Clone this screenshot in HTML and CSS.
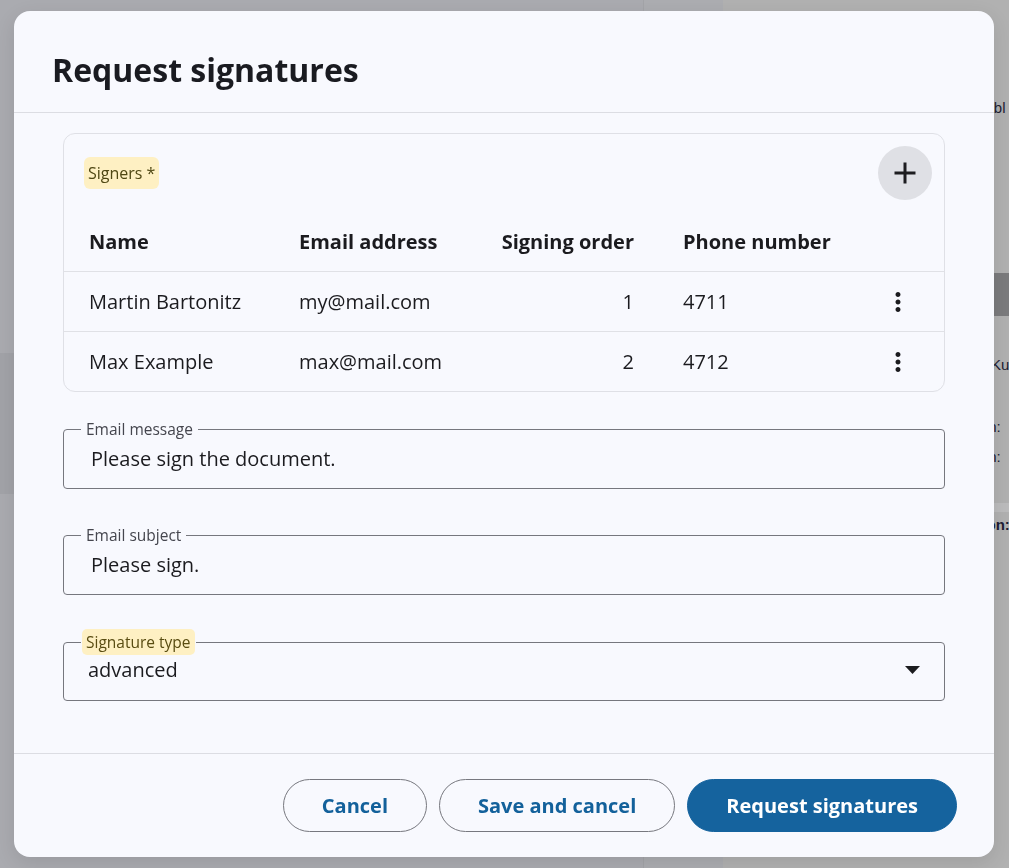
FILE: index.html
```html
<!DOCTYPE html>
<html lang="en">
<head>
<meta charset="utf-8">
<title>Request signatures</title>
<link rel="stylesheet" href="styles.css">
</head>
<body>
<div class="page" aria-hidden="true">
  <div class="col-main"><div class="band-main"></div></div>
  <div class="col-side"></div>
  <div class="col-right">
    <div class="rtext r-table">Tabl</div>
    <div class="rband-dark"></div>
    <div class="rtext r-kunde">Ku</div>
    <div class="rtext r-person1">Person:</div>
    <div class="rtext r-person2">Person:</div>
    <div class="rband-light"></div>
    <div class="rtext r-region">Region:</div>
  </div>
</div>

<div class="scrim">
  <div class="dialog" role="dialog" aria-labelledby="dlg-title">
    <header class="dlg-head">
      <h1 class="dlg-title" id="dlg-title">Request signatures</h1>
    </header>

    <div class="dlg-body">
      <section class="signers">
        <div class="signers-top">
          <span class="chip-signers">Signers *</span>
          <button class="add-btn" type="button" aria-label="Add signer">
            <svg width="36" height="36" viewBox="0 0 24 24" aria-hidden="true"><path fill="currentColor" d="M19 13h-6v6h-2v-6H5v-2h6V5h2v6h6v2z"/></svg>
          </button>
        </div>
        <div class="grid-row head-row">
          <div class="c-name">Name</div>
          <div class="c-email">Email address</div>
          <div class="c-order">Signing order</div>
          <div class="c-phone">Phone number</div>
          <div class="c-act"></div>
        </div>
        <div class="grid-row body-row">
          <div class="c-name">Martin Bartonitz</div>
          <div class="c-email">my@mail.com</div>
          <div class="c-order">1</div>
          <div class="c-phone">4711</div>
          <div class="c-act"><button class="kebab" type="button" aria-label="More"><svg width="30" height="30" viewBox="0 0 24 24" aria-hidden="true"><path fill="currentColor" d="M12 8c1.1 0 2-.9 2-2s-.9-2-2-2-2 .9-2 2 .9 2 2 2zm0 2c-1.1 0-2 .9-2 2s.9 2 2 2 2-.9 2-2-.9-2-2-2zm0 6c-1.1 0-2 .9-2 2s.9 2 2 2 2-.9 2-2-.9-2-2-2z"/></svg></button></div>
        </div>
        <div class="grid-row body-row last">
          <div class="c-name">Max Example</div>
          <div class="c-email">max@mail.com</div>
          <div class="c-order">2</div>
          <div class="c-phone">4712</div>
          <div class="c-act"><button class="kebab" type="button" aria-label="More"><svg width="30" height="30" viewBox="0 0 24 24" aria-hidden="true"><path fill="currentColor" d="M12 8c1.1 0 2-.9 2-2s-.9-2-2-2-2 .9-2 2 .9 2 2 2zm0 2c-1.1 0-2 .9-2 2s.9 2 2 2 2-.9 2-2-.9-2-2-2zm0 6c-1.1 0-2 .9-2 2s.9 2 2 2 2-.9 2-2-.9-2-2-2z"/></svg></button></div>
        </div>
      </section>

      <fieldset class="field f1">
        <legend><span class="lbl">Email message</span></legend>
        <div class="field-value">Please sign the document.</div>
      </fieldset>

      <fieldset class="field f2">
        <legend><span class="lbl">Email subject</span></legend>
        <div class="field-value">Please sign.</div>
      </fieldset>

      <fieldset class="field f3 select">
        <legend><span class="lbl chip">Signature type</span></legend>
        <div class="select-row">
          <span>advanced</span>
          <svg class="arrow" width="15" height="8" viewBox="0 0 15 8" aria-hidden="true"><path fill="currentColor" d="M0 0h15L7.5 8z"/></svg>
        </div>
      </fieldset>
    </div>

    <footer class="dlg-foot">
      <button class="btn" type="button">Cancel</button>
      <button class="btn" type="button">Save and cancel</button>
      <button class="btn btn-primary" type="button">Request signatures</button>
    </footer>
  </div>
</div>
</body>
</html>
```

FILE: styles.css
```css
* { box-sizing: border-box; }
html, body { margin: 0; padding: 0; }
body {
  width: 1009px;
  height: 868px;
  overflow: hidden;
  background: #aaabb0;
  font-family: "Open Sans", "Noto Sans", sans-serif;
}

/* page behind the overlay */
.page {
  display: grid;
  grid-template-columns: 643px 80px 1fr;
  height: 868px;
}
.col-main { background: #aaabb0; padding-top: 353px; }
.band-main { height: 141px; background: #a2a3a8; }
.col-side { background: #acadb1; border-left: 1px solid #a3a4a8; }
.col-right {
  background: #b1b1b1;
  font-family: "Liberation Sans", Arial, sans-serif;
  font-size: 15px;
  line-height: 20px;
  color: #1d1d33;
  white-space: nowrap;
  overflow: hidden;
}
.rtext { height: 20px; }
.r-table { margin-top: 98px; padding-left: 255px; }
.rband-dark { margin-top: 155px; height: 43px; background: #7b7b7d; }
.r-kunde { margin-top: 39px; padding-left: 268px; }
.r-person1 { margin-top: 42px; padding-left: 226px; }
.r-person2 { margin-top: 10px; padding-left: 226px; }
.rband-light { margin-top: 36px; height: 9px; background: #bcbcbd; }
.r-region { margin-top: 3px; padding-left: 231px; font-weight: 700; }

/* modal */
.scrim {
  position: fixed;
  inset: 0;
  padding: 11px 15px 11px 14px;
  display: flex;
}
.dialog {
  width: 980px;
  height: 846px;
  background: #f8f9fe;
  border-radius: 16px;
  display: flex;
  flex-direction: column;
  overflow: hidden;
  box-shadow: 0 6px 20px rgba(0, 0, 0, 0.10);
}
.dlg-head {
  height: 102px;
  padding: 39px 38px 22px;
  border-bottom: 1px solid #dcdde3;
}
.dlg-title {
  margin: 0;
  font-size: 32px;
  line-height: 40px;
  font-weight: 700;
  color: #1a1b21;
}
.dlg-body {
  flex: 1;
  padding: 20px 49px 0;
  display: flex;
  flex-direction: column;
}

/* signers card */
.signers {
  border: 1px solid #dfe0e6;
  border-radius: 12px;
}
.signers-top {
  display: flex;
  align-items: center;
  justify-content: space-between;
  padding: 12px 12px 0 20px;
}
.chip-signers {
  font-size: 16px;
  line-height: 32px;
  padding: 0 4px;
  background: #fef0c3;
  color: #4f4713;
  border-radius: 6px;
}
.add-btn {
  width: 54px;
  height: 54px;
  border-radius: 50%;
  border: 0;
  padding: 0;
  background: #dfe0e5;
  color: #1d1d20;
  display: flex;
  align-items: center;
  justify-content: center;
}
.grid-row {
  display: grid;
  grid-template-columns: 210px 200px 185px 205px 80px;
  align-items: center;
  font-size: 20px;
  color: #1b1b1f;
}
.head-row {
  margin-top: 11px;
  height: 61px;
  border-bottom: 1px solid #e0e1e6;
  font-weight: 700;
}
.body-row {
  height: 60px;
  border-bottom: 1px solid #e0e1e6;
}
.body-row.last { height: 59px; border-bottom: 0; }
.c-name { padding-left: 25px; }
.c-email { padding-left: 25px; }
.c-order { text-align: right; padding-right: 25px; }
.c-phone { padding-left: 24px; }
.c-act { padding-left: 19px; display: flex; }
.kebab {
  width: 30px;
  height: 30px;
  padding: 0;
  border: 0;
  background: transparent;
  color: #1b1b1f;
  display: flex;
}

/* outlined fields */
.field {
  margin: 0;
  min-width: 0;
  padding: 0 24px 17px 17px;
  border: 1px solid #76777e;
  border-radius: 4px;
}
.f1 { margin-top: 24px; }
.f2 { margin-top: 33px; }
.f3 { margin-top: 34px; padding-bottom: 18px; }
.field legend {
  padding: 0 1px;
  font-size: 15.5px;
  line-height: 26px;
  height: 26px;
  color: #45464e;
}
.lbl { display: inline-block; padding: 0 4px; }
.lbl.chip {
  background: #fef0c3;
  color: #594c12;
  border-radius: 5px;
}
.field-value {
  padding: 5px 0 0 10px;
  font-size: 20px;
  line-height: 24px;
  color: #1b1b1f;
}
.select-row {
  display: flex;
  align-items: center;
  justify-content: space-between;
  padding: 3px 0 0 7px;
  font-size: 20px;
  line-height: 24px;
  color: #1b1b1f;
}
.arrow { color: #1c1c1f; }

/* footer */
.dlg-foot {
  height: 104px;
  border-top: 1px solid #dcdde3;
  padding: 25px 37px 0;
  display: flex;
  justify-content: flex-end;
  align-items: flex-start;
  gap: 12px;
}
.btn {
  height: 53px;
  padding: 0 38px;
  border-radius: 27px;
  border: 1px solid #77787f;
  background: transparent;
  font-family: "Open Sans", "Noto Sans", sans-serif;
  font-size: 20px;
  font-weight: 700;
  color: #13619b;
}
.btn-primary {
  background: #15639e;
  border-color: #15639e;
  color: #ffffff;
}
```
